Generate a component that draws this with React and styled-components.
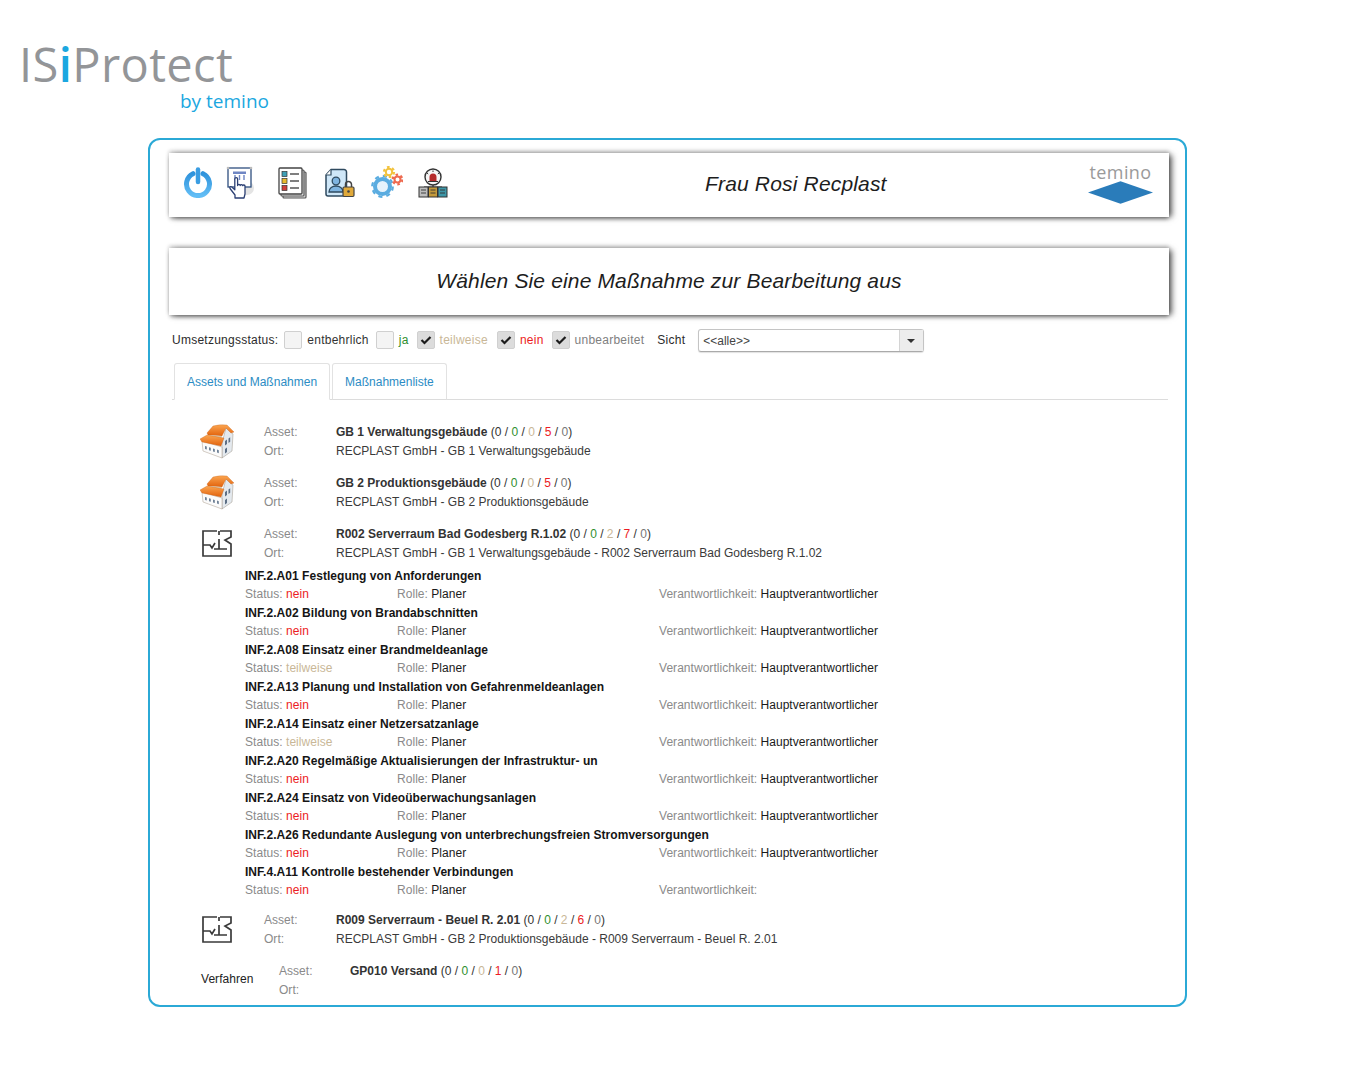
import React from "react";
import styled, { createGlobalStyle } from "styled-components";

const assetsTop = [
  {
    icon: "house",
    name: "GB 1 Verwaltungsgebäude",
    counts: [0, 0, 0, 5, 0],
    place: "RECPLAST GmbH - GB 1 Verwaltungsgebäude",
  },
  {
    icon: "house",
    name: "GB 2 Produktionsgebäude",
    counts: [0, 0, 0, 5, 0],
    place: "RECPLAST GmbH - GB 2 Produktionsgebäude",
  },
  {
    icon: "plan",
    name: "R002 Serverraum Bad Godesberg R.1.02",
    counts: [0, 0, 2, 7, 0],
    place: "RECPLAST GmbH - GB 1 Verwaltungsgebäude - R002 Serverraum Bad Godesberg R.1.02",
  },
];

const measures = [
  { title: "INF.2.A01 Festlegung von Anforderungen", status: "nein", duty: "Hauptverantwortlicher" },
  { title: "INF.2.A02 Bildung von Brandabschnitten", status: "nein", duty: "Hauptverantwortlicher" },
  { title: "INF.2.A08 Einsatz einer Brandmeldeanlage", status: "teilweise", duty: "Hauptverantwortlicher" },
  { title: "INF.2.A13 Planung und Installation von Gefahrenmeldeanlagen", status: "nein", duty: "Hauptverantwortlicher" },
  { title: "INF.2.A14 Einsatz einer Netzersatzanlage", status: "teilweise", duty: "Hauptverantwortlicher" },
  { title: "INF.2.A20 Regelmäßige Aktualisierungen der Infrastruktur- un", status: "nein", duty: "Hauptverantwortlicher" },
  { title: "INF.2.A24 Einsatz von Videoüberwachungsanlagen", status: "nein", duty: "Hauptverantwortlicher" },
  { title: "INF.2.A26 Redundante Auslegung von unterbrechungsfreien Stromversorgungen", status: "nein", duty: "Hauptverantwortlicher" },
  { title: "INF.4.A11 Kontrolle bestehender Verbindungen", status: "nein", duty: "" },
];

const filters = [
  { label: "entbehrlich", tone: "plain", checked: false, gap: 7 },
  { label: "ja", tone: "green", checked: false, gap: 8 },
  { label: "teilweise", tone: "tan", checked: true, gap: 9 },
  { label: "nein", tone: "red", checked: true, gap: 8 },
  { label: "unbearbeitet", tone: "grey", checked: true, gap: 13 },
];

const toneColors = {
  plain: "#333",
  green: "#2f8f2f",
  tan: "#c9b797",
  red: "#ec1c24",
  grey: "#808080",
  muted: "#777",
};

const countTones = ["plain", "green", "tan", "red", "muted"];

const PowerIcon = () => (
  <svg width="30" height="31" viewBox="0 0 30 31">
    <defs>
      <linearGradient id="pw" x1="0" y1="0" x2="0" y2="1">
        <stop offset="0" stopColor="#2f93dc" />
        <stop offset="1" stopColor="#62bdf5" />
      </linearGradient>
    </defs>
    <path d="M10 6.700A11.500 11.500 0 1 0 20 6.700" fill="none" stroke="url(#pw)" strokeWidth="5" strokeLinecap="round" />
    <path d="M15 2.500v12.500" stroke="#3a9de2" strokeWidth="4.500" strokeLinecap="round" />
  </svg>
);

const TouchIcon = () => (
  <svg width="28" height="33" viewBox="0 0 28 33">
    <ellipse cx="21" cy="22" rx="7" ry="7" fill="#e4e4e4" />
    <rect x="2" y="2" width="23" height="19" fill="#fff" stroke="#2f4f7f" strokeWidth="1.300" />
    <circle cx="2" cy="2" r="1.300" fill="#bbb" />
    <circle cx="25" cy="2" r="1.300" fill="#bbb" />
    <rect x="7" y="5.500" width="13" height="2.500" fill="#6f86c4" />
    <path d="M9 9v5M13.500 9v5M18 9v5" stroke="#6f86c4" strokeWidth="1.400" />
    <path
      d="M9 32v-3l-5-6.500c-.8-1.400.8-2.400 1.800-1.400l3 2.600V13c0-1.800 2.800-1.800 2.800 0v6.500c0-1.400 2.600-1.400 2.600 0 0-1.200 2.500-1.200 2.500.2 .2-1 2.300-1 2.300.4V28l-1 4z"
      fill="#fff"
      stroke="#2b3f73"
      strokeWidth="1.300"
      strokeLinejoin="round"
    />
  </svg>
);

const ListIcon = () => (
  <svg width="29" height="32" viewBox="0 0 29 32">
    <rect x="5" y="5" width="23" height="26" rx="1" fill="#d8d8d8" stroke="#555" strokeWidth="1.200" />
    <rect x="3" y="3" width="23" height="26" rx="1" fill="#e9e9e9" stroke="#555" strokeWidth="1.200" />
    <rect x="1" y="1" width="23" height="26" rx="1" fill="#fff" stroke="#444" strokeWidth="1.300" />
    <rect x="4" y="4.500" width="5" height="5" fill="#3f9fb5" stroke="#333" strokeWidth=".7" />
    <rect x="4" y="11.500" width="5" height="5" fill="#e8b92c" stroke="#333" strokeWidth=".7" />
    <rect x="4" y="18.500" width="5" height="5" fill="#cf3f3a" stroke="#333" strokeWidth=".7" />
    <path d="M12 7h9M12 14h9M12 21h9" stroke="#555" strokeWidth="1.400" />
  </svg>
);

const DocLockIcon = () => (
  <svg width="30" height="30" viewBox="0 0 30 30">
    <path d="M6 1.500h13a2.500 2.500 0 0 1 2.500 2.500v22a2 2 0 0 1-2 2H3a2 2 0 0 1-2-2V7z" fill="#cfe7f8" stroke="#2f4a5f" strokeWidth="1.500" strokeLinejoin="round" />
    <path d="M6 1.500V7H1" fill="#fff" stroke="#2f4a5f" strokeWidth="1.200" />
    <circle cx="11" cy="13" r="3.800" fill="#7fb4e0" stroke="#2f4a5f" strokeWidth="1.300" />
    <path d="M4 24c0-8 14-8 14 0z" fill="#7fb4e0" stroke="#2f4a5f" strokeWidth="1.300" />
    <path d="M20.500 19v-2.500a3 3 0 0 1 6 0V19" fill="none" stroke="#444" strokeWidth="1.500" />
    <rect x="18" y="19" width="11" height="9.500" rx="1.200" fill="#e0a93a" stroke="#444" strokeWidth="1.200" />
    <circle cx="23.500" cy="23.500" r="1.300" fill="#444" />
  </svg>
);

const Gear = ({ cx, cy, r, color, width, teeth, inner }) => {
  const outer = r + width / 2 + 0.8;
  const dash = (2 * Math.PI * outer) / (teeth * 2);
  return (
    <g fill="none" stroke={color}>
      <circle cx={cx} cy={cy} r={r} strokeWidth={width} fill={inner} />
      <circle cx={cx} cy={cy} r={outer} strokeWidth="2.200" strokeDasharray={`${dash} ${dash}`} />
    </g>
  );
};

const GearsIcon = () => (
  <svg width="33" height="33" viewBox="0 0 33 33">
    <Gear cx={12.500} cy={20.500} r={7.500} color="#5aace0" width={4} teeth={8} inner="#e6f3fc" />
    <Gear cx={19} cy={6} r={3.200} color="#f2c33e" width={2} teeth={6} inner="#fff" />
    <Gear cx={27.500} cy={13.500} r={3} color="#ee6a50" width={2} teeth={6} inner="#fff" />
  </svg>
);

const AlarmIcon = () => (
  <svg width="30" height="30" viewBox="0 0 30 30">
    <circle cx="15" cy="9" r="8" fill="#f6f6f6" stroke="#333" strokeWidth="1.400" />
    <path d="M11.500 13V9a3.500 3.500 0 0 1 7 0v4z" fill="#b52a2a" />
    <path d="M10 13.500h10M15 17v2M6 19h18" stroke="#333" strokeWidth="1.100" fill="none" />
    <path d="M15 2.500v1.500M9 5l1.200 1M21 5l-1.200 1" stroke="#333" strokeWidth="1" />
    <rect x="1" y="19" width="9" height="10" fill="#bdbdbd" stroke="#333" strokeWidth="1" />
    <rect x="10.500" y="19" width="9" height="10" fill="#c39a3c" stroke="#333" strokeWidth="1" />
    <rect x="20" y="19" width="9" height="10" fill="#3e97a8" stroke="#333" strokeWidth="1" />
    <path d="M3 22h5M3 25h5M12.500 22h5M12.500 25h5M22 22h5M22 25h5" stroke="#333" strokeWidth=".9" />
  </svg>
);

const HouseIcon = () => (
  <svg width="36" height="36" viewBox="0 0 36 36">
    <defs>
      <linearGradient id="roof" x1="0" y1="0" x2="0" y2="1">
        <stop offset="0" stopColor="#fba651" />
        <stop offset="1" stopColor="#e2620c" />
      </linearGradient>
    </defs>
    <path d="M26 5l7 6-1 17-10 7V20z" fill="#e4e9ee" stroke="#9d9488" strokeWidth=".5" />
    <path d="M2 18l20 6v11L3 28z" fill="#fbfbfb" stroke="#a89a8a" strokeWidth=".5" />
    <path d="M5 23l1.800.6v3l-1.800-.6zM9 24.200l1.800.6v3L9 27.200zM13 25.400l1.800.6v3l-1.800-.6zM17 26.600l1.800.6v3l-1.800-.6z" fill="#6f8196" />
    <path d="M25 18l2-1.500v4.500L25 22.500zM28.500 15.500l1.700-1.300v4.500l-1.700 1.300zM25 26l2-1.500V29l-2 1.500z" fill="#5d6f85" />
    <path d="M7 10l6-7q7-2 14-1l7 7-3 1-5-5-4 8-14-1z" fill="url(#roof)" stroke="#c05a10" strokeWidth=".3" />
    <path d="M8 12l14 1-1 2.500-13-1.500z" fill="#d9c9b0" />
    <path d="M0 16l7-4 17 3-3 8-19-4z" fill="url(#roof)" stroke="#c05a10" strokeWidth=".3" />
  </svg>
);

const PlanIcon = () => (
  <svg width="32" height="27" viewBox="0 0 32 27">
    <path
      d="M16 1H2v25h28V14l-6-4 6-3V1H19M2 15h7l2 3 3-5M18 9v10M13 19h13M18 1v4"
      fill="none"
      stroke="#3a3a3a"
      strokeWidth="1.700"
    />
  </svg>
);

const CheckMark = () => (
  <svg width="12" height="10" viewBox="0 0 12 10">
    <path d="M1.500 5l3 3 6-6" fill="none" stroke="#1c1c1c" strokeWidth="2.200" />
  </svg>
);

const Counts = ({ values }) => (
  <CountText>
    {" ("}
    {values.map((v, i) => (
      <React.Fragment key={i}>
        {i > 0 && " / "}
        <Tone $tone={countTones[i]}>{v}</Tone>
      </React.Fragment>
    ))}
    {")"}
  </CountText>
);

const AssetRow = ({ icon, name, counts, place }) => (
  <AssetBlock>
    <AssetIcon $house={icon === "house"}>{icon === "house" ? <HouseIcon /> : <PlanIcon />}</AssetIcon>
    <Label>Asset:</Label>
    <Value>
      <b>{name}</b>
      <Counts values={counts} />
    </Value>
    <Label>Ort:</Label>
    <Value>{place}</Value>
  </AssetBlock>
);

const Measure = ({ title, status, duty }) => (
  <MeasureBlock>
    <MeasureTitle>{title}</MeasureTitle>
    <MeasureMeta>
      <span>
        <Label>Status: </Label>
        <Tone $tone={status === "nein" ? "red" : "tan"}>{status}</Tone>
      </span>
      <span>
        <Label>Rolle: </Label>
        <Dark>Planer</Dark>
      </span>
      <span>
        <Label>Verantwortlichkeit: </Label>
        <Dark>{duty}</Dark>
      </span>
    </MeasureMeta>
  </MeasureBlock>
);

export default function App() {
  return (
    <Page>
      <GlobalStyle />
      <Brand>
        <BrandName>
          IS<i>i</i>Protect
        </BrandName>
        <BrandSub>by temino</BrandSub>
      </Brand>

      <Frame>
        <HeaderCard>
          <IconRow>
            <IconSlot $gap={13}><PowerIcon /></IconSlot>
            <IconSlot $gap={24}><TouchIcon /></IconSlot>
            <IconSlot $gap={18}><ListIcon /></IconSlot>
            <IconSlot $gap={15}><DocLockIcon /></IconSlot>
            <IconSlot $gap={15}><GearsIcon /></IconSlot>
            <IconSlot><AlarmIcon /></IconSlot>
          </IconRow>
          <UserName>Frau Rosi Recplast</UserName>
          <Temino>
            <TeminoText>temino</TeminoText>
            <svg width="65" height="23" viewBox="0 0 66 23">
              <path d="M0 11.500L33 0l33 11.500L33 23z" fill="#2a7cba" />
            </svg>
          </Temino>
        </HeaderCard>

        <TitleCard>Wählen Sie eine Maßnahme zur Bearbeitung aus</TitleCard>

        <FilterBar>
          <FilterLabel $first>Umsetzungsstatus:</FilterLabel>
          {filters.map((f) => (
            <FilterItem key={f.label} $gap={f.gap}>
              <Box $checked={f.checked}>{f.checked && <CheckMark />}</Box>
              <Tone $tone={f.tone}>{f.label}</Tone>
            </FilterItem>
          ))}
          <FilterLabel>Sicht</FilterLabel>
          <SelectBox>
            <SelectValue>&lt;&lt;alle&gt;&gt;</SelectValue>
            <SelectArrow />
          </SelectBox>
        </FilterBar>

        <Tabs>
          <Tab $active>Assets und Maßnahmen</Tab>
          <Tab>Maßnahmenliste</Tab>
        </Tabs>

        <AssetList>
          {assetsTop.map((a) => (
            <AssetRow key={a.name} {...a} />
          ))}
        </AssetList>

        <MeasureList>
          {measures.map((m) => (
            <Measure key={m.title} {...m} />
          ))}
        </MeasureList>

        <AssetList $top={10}>
          <AssetRow
            icon="plan"
            name="R009 Serverraum - Beuel R. 2.01"
            counts={[0, 0, 2, 6, 0]}
            place="RECPLAST GmbH - GB 2 Produktionsgebäude - R009 Serverraum - Beuel R. 2.01"
          />
          <ProcessBlock>
            <ProcessName>Verfahren</ProcessName>
            <Label>Asset:</Label>
            <Value>
              <b>GP010 Versand</b>
              <Counts values={[0, 0, 0, 1, 0]} />
            </Value>
            <Label>Ort:</Label>
          </ProcessBlock>
        </AssetList>
      </Frame>
    </Page>
  );
}

const GlobalStyle = createGlobalStyle`
  html, body {
    margin: 0;
    background: #fff;
  }
  body {
    font-family: "Liberation Sans", Arial, sans-serif;
    font-size: 12px;
    letter-spacing: 0.04px;
    color: #333;
  }
`;

const Page = styled.div`
  width: 1350px;
  height: 1080px;
  overflow: hidden;
`;

const Brand = styled.div`
  height: 138px;
  padding-left: 19px;
  box-sizing: border-box;
  padding-top: 38px;
  font-family: "Open Sans", sans-serif;
`;

const BrandName = styled.div`
  font-size: 47px;
  line-height: 52px;
  height: 52px;
  color: #939598;
  letter-spacing: 0.4px;

  i {
    font-style: normal;
    font-weight: 600;
    color: #1ba7e0;
  }
`;

const BrandSub = styled.div`
  margin-left: 161px;
  white-space: nowrap;
  font-size: 19px;
  line-height: 22px;
  letter-spacing: 0;
  color: #1ba7e0;
`;

const Frame = styled.div`
  margin-left: 148px;
  width: 1039px;
  height: 869px;
  box-sizing: border-box;
  border: 2px solid #2ba9d6;
  border-radius: 12px;
  padding: 13px 16px 0 19px;
`;

const cardShadow = `
  box-shadow: 4px 1px 6px -1px rgba(0, 0, 0, 0.6), 0 -2px 4px rgba(0, 0, 0, 0.22),
    0 3px 4px -1px rgba(0, 0, 0, 0.35);
`;

const HeaderCard = styled.div`
  display: flex;
  align-items: center;
  height: 64px;
  background: #fff;
  padding: 0 16px 0 14px;
  ${cardShadow}
`;

const IconRow = styled.div`
  display: flex;
  align-items: center;
  padding-bottom: 5px;
  flex-shrink: 0;
`;

const IconSlot = styled.div`
  display: flex;
  margin-right: ${({ $gap }) => $gap ?? 0}px;
`;

const UserName = styled.div`
  margin-left: 257px;
  margin-bottom: 2px;
  font-size: 21px;
  font-style: italic;
  color: #1d1d1d;
  white-space: nowrap;
  letter-spacing: 0.17px;
`;

const Temino = styled.div`
  margin-left: auto;
  display: flex;
  flex-direction: column;
  align-items: center;
  padding-bottom: 4px;
`;

const TeminoText = styled.div`
  font-family: "Open Sans", sans-serif;
  font-size: 18px;
  line-height: 18px;
  letter-spacing: 0.4px;
  color: #9a9a9a;
`;

const TitleCard = styled.div`
  margin-top: 31px;
  height: 67px;
  padding-bottom: 2px;
  box-sizing: border-box;
  display: flex;
  align-items: center;
  justify-content: center;
  background: #fff;
  font-size: 21px;
  letter-spacing: 0.15px;
  font-style: italic;
  color: #1d1d1d;
  ${cardShadow}
`;

const FilterBar = styled.div`
  margin-top: 14px;
  margin-left: 3px;
  height: 23px;
  display: flex;
  align-items: center;
  letter-spacing: 0.25px;
`;

const FilterLabel = styled.span`
  color: #2b2b2b;
  margin-right: ${({ $first }) => ($first ? 6 : 5)}px;
  margin-bottom: 2px;
`;

const FilterItem = styled.div`
  display: flex;
  align-items: center;
  gap: 5px;
  margin-bottom: 2px;
  margin-right: ${({ $gap }) => $gap}px;
`;

const Box = styled.div`
  width: 18px;
  height: 18px;
  box-sizing: border-box;
  border: 1px solid #d0d0d0;
  border-radius: 2px;
  display: flex;
  align-items: center;
  justify-content: center;
  background: ${({ $checked }) => ($checked ? "#dcdcdc" : "#f4f4f4")};
`;

const SelectBox = styled.div`
  margin-left: 8px;
  width: 226px;
  height: 23px;
  box-sizing: border-box;
  border: 1px solid #c4c4c4;
  border-bottom-color: #aaa;
  border-radius: 3px;
  display: flex;
  align-items: stretch;
  box-shadow: 0 1px 1px rgba(0, 0, 0, 0.12);
`;

const SelectValue = styled.div`
  flex: 1;
  padding-left: 4px;
  line-height: 22px;
  font-size: 12px;
  letter-spacing: 0;
  color: #444;
`;

const SelectArrow = styled.div`
  width: 23px;
  background: #ededed;
  border-left: 1px solid #d4d4d4;
  position: relative;

  &::after {
    content: "";
    position: absolute;
    left: 7px;
    top: 9px;
    border: 4px solid transparent;
    border-top: 4px solid #333;
    border-bottom: 0;
  }
`;

const Tabs = styled.div`
  margin: 11px 1px 0 3px;
  height: 36px;
  display: flex;
  gap: 2px;
  border-bottom: 1px solid #dcdcdc;
  padding-left: 2px;
  letter-spacing: 0;
`;

const Tab = styled.div`
  height: 37px;
  box-sizing: border-box;
  padding: 0 12px;
  display: flex;
  align-items: center;
  border: 1px solid #e2e2e2;
  border-bottom: ${({ $active }) => ($active ? "1px solid #fff" : "1px solid #dcdcdc")};
  border-radius: 3px 3px 0 0;
  background: #fff;
  color: #2b8cc4;
`;

const AssetList = styled.div`
  margin-top: ${({ $top }) => $top ?? 22}px;
  margin-left: 32px;
  display: flex;
  flex-direction: column;
  gap: 13px;
`;

const AssetBlock = styled.div`
  display: grid;
  grid-template-columns: 63px 72px 1fr;
  grid-auto-rows: 19px;
  align-items: center;

  & > :nth-child(4) {
    grid-column: 2;
  }
`;

const AssetIcon = styled.div`
  grid-row: span 2;
  display: flex;
  align-items: center;
  margin-left: ${({ $house }) => ($house ? -1 : 0)}px;
`;

const Label = styled.span`
  color: #8a8a8a;
`;

const Value = styled.div`
  color: #3a3a3a;
  white-space: nowrap;
  letter-spacing: 0;

  b {
    color: #333;
  }
`;

const CountText = styled.span`
  color: #333;
`;

const Tone = styled.span`
  color: ${({ $tone }) => toneColors[$tone]};
`;

const Dark = styled.span`
  color: #1a1a1a;
`;

const MeasureList = styled.div`
  margin-top: 5px;
  margin-left: 76px;
`;

const MeasureBlock = styled.div`
  height: 37px;
`;

const MeasureTitle = styled.div`
  height: 18px;
  line-height: 19px;
  font-weight: 700;
  color: #151515;
  white-space: nowrap;
`;

const MeasureMeta = styled.div`
  height: 18px;
  line-height: 18px;
  display: grid;
  grid-template-columns: 152px 262px 1fr;
`;

const ProcessBlock = styled.div`
  margin-top: 1px;
  display: grid;
  grid-template-columns: 78px 71px 1fr;
  grid-auto-rows: 18.500px;
  align-items: center;

  & > :nth-child(4) {
    grid-column: 2;
  }
`;

const ProcessName = styled.div`
  grid-row: span 2;
  padding-bottom: 3px;
  color: #222;
`;
